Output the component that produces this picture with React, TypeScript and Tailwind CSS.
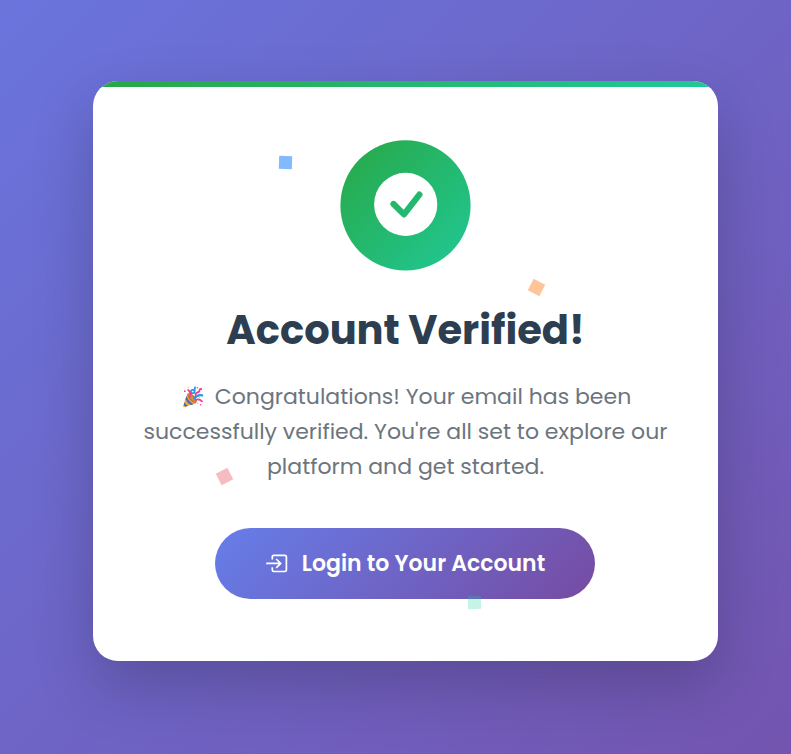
import React from 'react';

const font = "font-[Poppins,Inter,'Liberation_Sans',sans-serif]";

function SuccessIcon() {
  return (
    <svg className="block h-[132px] w-[131px]" viewBox="0 0 131 132">
      <defs>
        <linearGradient id="success" x1="0" y1="0" x2="1" y2="1">
          <stop offset="0" stopColor="#28a745" />
          <stop offset="1" stopColor="#20c997" />
        </linearGradient>
        <linearGradient id="tick" gradientUnits="userSpaceOnUse" x1="1" y1="1" x2="131" y2="131">
          <stop offset="0" stopColor="#28a745" />
          <stop offset="1" stopColor="#20c997" />
        </linearGradient>
      </defs>
      <circle cx="65.5" cy="66.4" r="65.1" fill="url(#success)" />
      <circle cx="65.7" cy="65.4" r="31.6" fill="#fff" />
      <path d="M53.5 65 L64 75.4 L79.4 55.6" fill="none" stroke="url(#tick)" strokeWidth="6.2" strokeLinecap="round" strokeLinejoin="round" />
    </svg>
  );
}

function PartyPopper() {
  return (
    <svg className="inline-block h-[22px] w-[22px]" viewBox="0 0 22 22" role="img" aria-label="Party popper">
      <path d="M5.5 7.5 Q4 10.5 1.2 20.2 Q.9 21.4 2.3 21 L14.2 17.2 Q13.2 11.5 5.5 7.5Z" fill="#f5a238" />
      <path d="M4.4 10.2 L3.5 13.2 Q6 17.8 9 19 L11.5 18.2 Q6.5 15.5 4.4 10.2Z M2.5 16.2 L1.7 19 L3.5 20.8 L5.8 20Q3.4 18.8 2.5 16.2Z" fill="#4269bb" />
      <ellipse cx="10.2" cy="12" rx="2.8" ry="6.2" transform="rotate(-43 10.2 12)" fill="#b5773f" />
      <path d="M5.8 7.6 Q10.6 8.4 14 16.3 Q9 15 5.8 7.6Z" fill="#da9139" />
      <path d="M12.2 12.4 Q15.4 8.4 20.2 9.4" fill="none" stroke="#2398e9" strokeWidth="2.2" strokeLinecap="round" />
      <path d="M11.8 6.8 Q8.4 7.8 9 5.2 Q9.6 3.2 12 4.2 M12.3 6.8 L13 1.4" fill="none" stroke="#2398e9" strokeWidth="1.8" strokeLinecap="round" />
      <path d="M6.2 4 Q9.4 6.6 8.3 10.6 M13.5 9 Q13.6 6.6 16.1 6.2 Q17.6 6 17.6 3.8 Q18 2.8 19.3 3 M13.6 13.8 Q17.2 12.4 20 15.4" fill="none" stroke="#f33c9a" strokeWidth="1.8" strokeLinecap="round" />
      <g fill="#f33c9a"><circle cx="2.8" cy="5.2" r=".9" /><circle cx="15.4" cy="1.8" r=".8" /><circle cx="18.6" cy="18.7" r=".8" /></g>
      <g fill="#ffc83d"><circle cx="6.3" cy="1.5" r=".8" /><circle cx="17.5" cy="11.8" r=".8" /><circle cx="15.7" cy="17.3" r=".8" /></g>
    </svg>
  );
}

function LoginIcon() {
  return (
    <svg className="h-[22px] w-[23px]" viewBox="0 0 23 22" fill="none" stroke="#fff" strokeWidth="1.7">
      <path d="M7.3 6.5 V3.9 Q7.3 2.3 8.9 2.3 H19.8 Q21.4 2.3 21.4 3.9 V16.9 Q21.4 18.5 19.8 18.5 H8.9 Q7.3 18.5 7.3 16.9 V14.3" />
      <path d="M1.2 10.4 H15.6 M11.2 6 L15.7 10.4 L11.2 14.8" />
    </svg>
  );
}

export default function App() {
  return (
    <main className={`flex h-[754px] w-full justify-center bg-[linear-gradient(135deg,#667eea_-31%,#764ba2_130%)] pt-[81px] pl-5 ${font}`}>
      <section className="relative h-[580px] w-[625px] rounded-[25px] bg-white shadow-[0_25px_62px_rgba(0,0,0,0.2)]">
        <div className="h-full overflow-hidden rounded-[25px]">
          <div className="h-1.5 bg-[linear-gradient(90deg,#28a745,#20c997)]" />
          <div className="flex flex-col items-center pt-[52px]">
            <SuccessIcon />
            <h1 className="mt-[33px] h-[52px] text-[40px] leading-[52px] font-bold whitespace-nowrap text-[#2c3e50]">Account Verified!</h1>
            <div className="mt-[23px] text-center text-[22px] leading-[35px] whitespace-nowrap text-[#6c757d]">
              <p className="flex items-center justify-center gap-[11px] pl-[2px]"><PartyPopper /><span>Congratulations! Your email has been</span></p>
              <p>successfully verified. You're all set to explore our</p>
              <p>platform and get started.</p>
            </div>
            <button className="mt-[44px] mr-px flex h-[71px] w-[380px] items-center justify-center gap-[14px] rounded-full bg-[linear-gradient(135deg,#667eea_0%,#764ba2_100%)] text-[22px] font-semibold whitespace-nowrap text-white">
              <LoginIcon />
              <span>Login to Your Account</span>
            </button>
          </div>
        </div>
        <i className="absolute top-[74.5px] left-[186.4px] h-[13px] w-[13px] rotate-[2deg] bg-[#82baff]" />
        <i className="absolute top-[200.4px] left-[436.5px] h-[13px] w-[13px] rotate-[27deg] bg-[#ffc599]" />
        <i className="absolute top-[389px] left-[125px] h-[13px] w-[13px] rotate-[-27deg] bg-[#f5bcc1]" />
        <i className="absolute top-[515px] left-[375px] h-[13px] w-[13px] rotate-[-2deg] bg-[#1dd1a1]/25" />
      </section>
    </main>
  );
}
